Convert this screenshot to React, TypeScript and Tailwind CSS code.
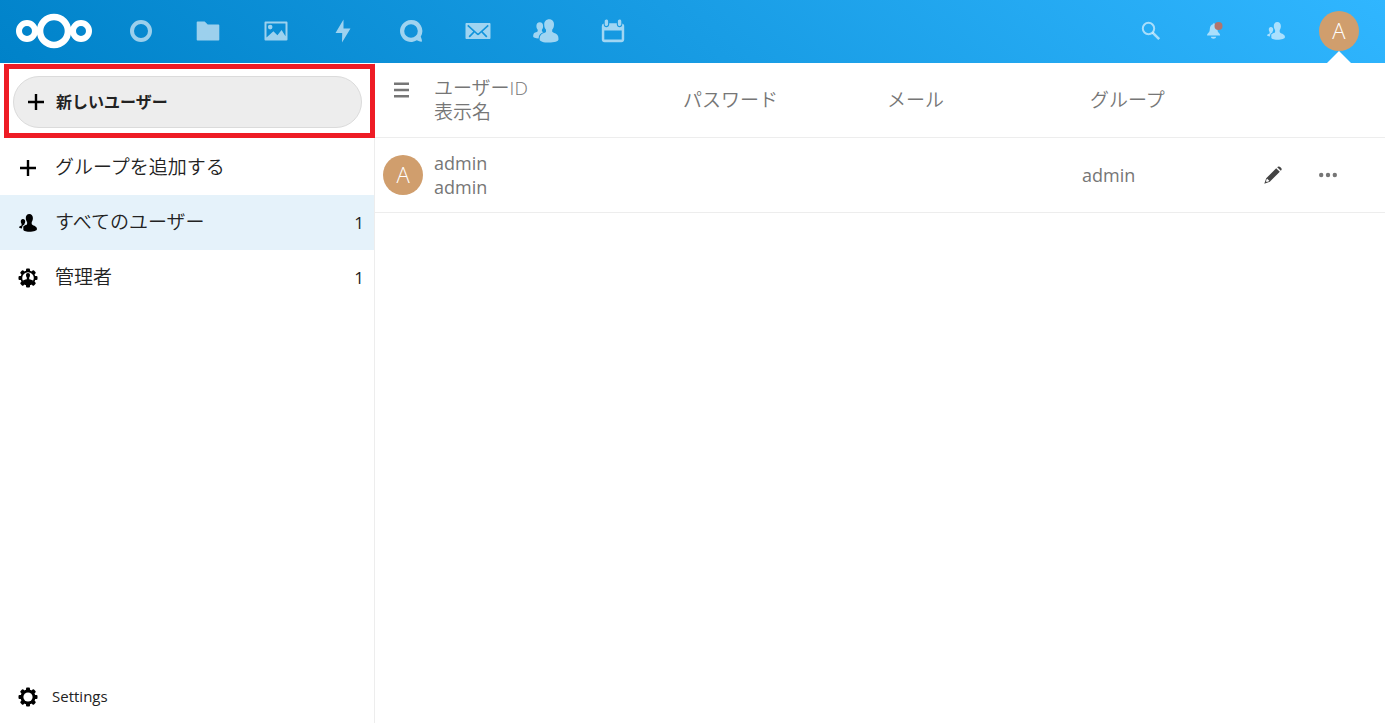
import type { ReactNode } from 'react'

type IconProps = { className?: string }

function Logo() {
  return (
    <svg width="78" height="36" viewBox="0 0 78 36" fill="none" stroke="#fff" aria-hidden="true">
      <circle cx="12" cy="18" r="8" strokeWidth="6" />
      <circle cx="39" cy="18" r="14" strokeWidth="6.6" />
      <circle cx="66" cy="18" r="8" strokeWidth="6" />
    </svg>
  )
}

function PeopleIcon({ className }: IconProps) {
  return (
    <svg className={className} viewBox="0 0 26 26" fill="currentColor" aria-hidden="true">
      <path d="M16.2 1.2c-3 0-5 2.200-5 5.200 0 2.600.8 4.100 1.800 5.400v2c-.3 1-3.300 1.400-4.800 2.700-1.100 1-1.600 2.800-1.600 5.200 0 1.500 3.800 2.900 9.300 2.900s9.600-1.300 9.600-3c0-2.400-.3-4.200-1.500-5.200-1.600-1.300-4.400-1.700-4.800-2.600v-2c1-1.300 1.800-2.800 1.800-5.400 0-3-1.800-5.200-4.800-5.200z" />
      <path d="M6.800 4.200c-2.200 0-3.400 1.700-3.400 3.800 0 1.800.6 2.900 1.300 3.800v1.400c-.3.800-2.600 1-3.500 1.900C.3 16 .2 17.300.2 18.800c0 .9 2.200 1.500 5.400 1.600.3-2.500 1.100-4.300 3.200-5.300l1.900-1c-.8-.3-1.600-.5-1.800-.9v-1.400c.7-.9 1.200-2 1.200-3.800 0-2.100-1.100-3.800-3.300-3.800z" />
    </svg>
  )
}

function UserIcon({ className }: IconProps) {
  return (
    <svg className={className} viewBox="0 0 18 18" fill="currentColor" aria-hidden="true">
      <path d="M10.300 0C8 0 6.800 1.700 6.800 4c0 1.800.6 3 1.300 4v1.900c0 1-2.900 1.200-3.600 2.400-.5.800 0 1.700-.2 2.600-.3 1.700 2.100 2.800 6 2.800 4.600 0 7.700-1 7.700-2.700 0-3.300-5-3.400-5.300-5V8c.7-1 1.200-2.200 1.200-4 0-2.300-1.300-4-3.600-4z" />
      <path d="M3.900 5C2.500 5 1.800 6.100 1.800 7.400c0 1.100.4 1.800.8 2.300v1.600C2.500 12 .1 12.100.1 13.300c0 .7 1 1.100 2.900 1.200.1-1.600.5-2.700 1.700-3.400l.7-.5v-.9c.4-.5.8-1.200.8-2.300C6.200 6.100 5.400 5 3.900 5z" />
    </svg>
  )
}

function PlusIcon() {
  return (
    <svg width="16" height="16" viewBox="0 0 16 16" fill="currentColor" aria-hidden="true">
      <path d="M6.800 0h2.400v6.800H16v2.400H9.200V16H6.800V9.200H0V6.800h6.800z" />
    </svg>
  )
}

function GearIcon({ person = false }: { person?: boolean }) {
  return (
    <svg width="20" height="20" viewBox="0 0 20 20" aria-hidden="true">
      <g fill="currentColor">
        <rect x="8" y="0.500" width="4" height="19" rx="1" />
        <rect x="0.500" y="8" width="19" height="4" rx="1" />
        <rect x="8" y="0.500" width="4" height="19" rx="1" transform="rotate(45 10 10)" />
        <rect x="8" y="0.500" width="4" height="19" rx="1" transform="rotate(-45 10 10)" />
        <circle cx="10" cy="10" r="7.500" />
      </g>
      <circle cx="10" cy="10" r={person ? 5.8 : 4.6} fill="#fff" />
      {person && (
        <path
          fill="currentColor"
          d="M10 5c-1.300 0-2 .9-2 2.200 0 1 .3 1.600.8 2.200v1.500c-.3.800-3.300.6-4.100 2.100L7 16h6l2.300-3c-.8-1.500-3.800-1.300-4.100-2.100V9.400c.5-.6.8-1.200.8-2.200C12 5.900 11.300 5 10 5z"
        />
      )}
    </svg>
  )
}

function Avatar() {
  return (
    <span className="flex size-10 items-center justify-center rounded-full bg-[#d09e6d] pb-[2px] text-[22px] leading-none font-light text-white">
      A
    </span>
  )
}

const apps: { name: string; icon: ReactNode }[] = [
  {
    name: 'ダッシュボード',
    icon: <circle cx="13" cy="13" r="9" fill="none" stroke="currentColor" strokeWidth="4" />,
  },
  {
    name: 'ファイル',
    icon: <path d="M2.500 3.500a.8.800 0 0 0-.8.800v17.400c0 .5.3.8.8.8h21c.5 0 .8-.3.800-.8V7.300c0-.5-.3-.8-.8-.8H12.700l-3-3z" />,
  },
  {
    name: '写真',
    icon: (
      <path
        fillRule="evenodd"
        d="M2.400 3.500c-.5 0-.9.400-.9.900v17.200c0 .5.4.9.900.9h21.200c.5 0 .9-.4.900-.9V4.400c0-.5-.4-.9-.9-.9zM3.500 5.500h19v12.800L18.600 12l-4.200 5.200-4-3.900-6.900 6.200zM7.200 6.800a2.300 2.300 0 1 0 0 4.600 2.300 2.300 0 0 0 0-4.600z"
      />
    ),
  },
  {
    name: 'アクティビティ',
    icon: <path d="M13.500 1.500 5.500 15h6.700l-.2 9.500 8.500-14h-7z" />,
  },
  {
    name: 'Talk',
    icon: (
      <path
        fillRule="evenodd"
        d="M13 2a11 11 0 1 0 5.900 20.300c1.700.8 3.700 1.700 4.600 1.400.9-.4.300-2.900-.8-5A11 11 0 0 0 13 2zm0 4.200a6.800 6.800 0 1 1 0 13.600 6.800 6.800 0 0 1 0-13.600z"
      />
    ),
  },
  {
    name: 'メール',
    icon: (
      <path
        fillRule="evenodd"
        d="M1.500 5h23c.5 0 1 .4 1 1v14c0 .6-.5 1-1 1h-23c-.5 0-1-.4-1-1V6c0-.6.500-1 1-1zm1.800 1.800L2.200 8l6.100 5.500-4.700 4.700 1.200 1.200 4.800-4.800 2.100 2c.8.700 1.800.7 2.600 0l2.100-2 4.800 4.800 1.200-1.200-4.700-4.700L23.800 8l-1.100-1.200-9 8.300c-.4.300-1 .3-1.400 0z"
      />
    ),
  },
  { name: '連絡先', icon: <PeopleIcon /> },
  {
    name: 'カレンダー',
    icon: (
      <path
        fillRule="evenodd"
        d="M6.400 1.500c-1 0-1.700.8-1.700 1.700v3c0 1 .8 1.800 1.700 1.800s1.700-.8 1.700-1.700V3.200c0-1-.7-1.700-1.700-1.700zm13.200 0c-1 0-1.700.8-1.700 1.700v3c0 1 .8 1.800 1.700 1.800s1.700-.8 1.700-1.700V3.200c0-1-.7-1.700-1.700-1.700zM9.200 5.300v1.200c0 1.500-1.300 2.700-2.800 2.700S3.700 8 3.700 6.500v-.9A2.700 2.700 0 0 0 1.800 8v13.500c0 1.600 1.100 2.700 2.700 2.700h17c1.600 0 2.700-1.100 2.700-2.700V8c0-1.100-.7-2-1.900-2.400v.9c0 1.500-1.200 2.700-2.700 2.700s-2.800-1.200-2.800-2.700V5.300zM4.300 12.400h17.400v9H4.300z"
      />
    ),
  },
]

function TopBar() {
  return (
    <header className="flex h-[63px] shrink-0 items-center bg-[linear-gradient(40deg,#0082c9_0%,#30b6ff_100%)] pb-px">
      <a href="#" aria-label="Nextcloud" className="flex w-[107px] shrink-0 pl-[15px]">
        <Logo />
      </a>
      <nav className="grid w-[540px] grid-cols-8">
        {apps.map((app) => (
          <a key={app.name} href="#" aria-label={app.name} className="flex justify-center text-white/60">
            <svg width="26" height="26" viewBox="0 0 26 26" fill="currentColor" aria-hidden="true">
              {app.icon}
            </svg>
          </a>
        ))}
      </nav>
      <div className="ml-auto mr-[15px] grid h-full w-[250px] grid-cols-4">
        <button aria-label="検索" className="flex items-center justify-center text-white/60">
          <svg width="20" height="20" viewBox="0 0 20 20" fill="none" stroke="currentColor" aria-hidden="true">
            <circle cx="7.500" cy="7.500" r="5.700" strokeWidth="2" />
            <path d="m11.600 11.600 6.600 6.600" strokeWidth="2.600" />
          </svg>
        </button>
        <button aria-label="通知" className="flex items-center justify-center text-white/60">
          <svg width="20" height="20" viewBox="0 0 20 20" fill="currentColor" aria-hidden="true">
            <path d="M10 1.700c-.7.200-.6 1-.6 1.300C7 3.500 5.900 5.500 5.800 8c-.1 2.500-.6 3.300-2 4.400-.6.500-.7 1.300-.7 2.100h13c0-.8-.1-1.600-.7-2.100-1.400-1.100-1.900-1.900-2-4.400C13.300 5.500 12 3.500 10.800 3z" />
            <path d="M6.800 15.800h5.400c-.2 1.200-1.300 2-2.700 2s-2.500-.8-2.700-2z" />
            <circle cx="14.500" cy="5" r="4" fill="#b2746c" />
          </svg>
        </button>
        <button aria-label="連絡先を検索" className="flex items-center justify-center text-white/60">
          <UserIcon className="size-[18px]" />
        </button>
        <button aria-label="設定" className="relative flex items-center justify-center">
          <Avatar />
          <svg className="absolute -bottom-px" width="24" height="12" viewBox="0 0 24 12" fill="#fff" aria-hidden="true">
            <path d="M12 0 24 12H0z" />
          </svg>
        </button>
      </div>
    </header>
  )
}

function Sidebar() {
  return (
    <aside className="flex w-[375px] shrink-0 flex-col border-r border-[#ededed] text-[#222]">
      <div className="-mr-px ml-1 mt-px border-5 border-[#ee1c25] pb-[5px] pl-1 pr-2 pt-[7px]">
        <button className="flex h-[52px] w-full items-center gap-3 rounded-full border border-[#dbdbdb] bg-[#ededed] pl-[14px] text-[16px] font-bold">
          <span className="text-black">
            <PlusIcon />
          </span>
          新しいユーザー
        </button>
      </div>
      <ul className="mt-[2px] text-[19px] font-[350]">
        <li>
          <button className="flex h-[55px] w-full items-center">
            <span className="flex w-[55px] justify-center text-black">
              <PlusIcon />
            </span>
            グループを追加する
          </button>
        </li>
        <li>
          <a href="#" className="flex h-[55px] items-center bg-[#e5f2fa] pr-[10px]">
            <span className="flex w-[55px] justify-center text-black">
              <UserIcon className="size-[18px]" />
            </span>
            すべてのユーザー
            <span className="ml-auto text-[17px] font-normal">1</span>
          </a>
        </li>
        <li>
          <a href="#" className="flex h-[55px] items-center pr-[10px]">
            <span className="flex w-[55px] justify-center text-black">
              <GearIcon person />
            </span>
            管理者
            <span className="ml-auto text-[17px] font-normal">1</span>
          </a>
        </li>
      </ul>
      <button className="mt-auto flex h-[53px] items-center gap-[14px] pl-[18px] text-[15px]">
        <span className="text-black">
          <GearIcon />
        </span>
        Settings
      </button>
    </aside>
  )
}

function UserTable() {
  return (
    <main className="min-w-0 flex-1">
      <table className="w-full table-fixed text-left text-[19px] leading-6 text-[#767676]">
        <colgroup>
          <col className="w-[59px]" />
          <col className="w-[249px]" />
          <col className="w-[204px]" />
          <col className="w-[203px]" />
          <col />
          <col className="w-[55px]" />
          <col className="w-[85px]" />
        </colgroup>
        <thead>
          <tr className="h-[74px] border-b border-[#ededed]">
            <th className="pb-5 pl-[19px]">
              <button aria-label="メニュー" className="block">
                <svg width="15" height="16" viewBox="0 0 15 16" fill="currentColor" aria-hidden="true">
                  <path d="M0 .5h15v2.400H0zM0 6.800h15v2.400H0zM0 13h15v2.400H0z" />
                </svg>
              </button>
            </th>
            <th className="font-[350]">
              ユーザーID
              <br />
              表示名
            </th>
            <th className="font-[350]">パスワード</th>
            <th className="font-[350]">メール</th>
            <th className="font-[350]">グループ</th>
            <td />
            <td />
          </tr>
        </thead>
        <tbody>
          <tr className="h-[75px] border-b border-[#ededed]">
            <td className="pl-2">
              <Avatar />
            </td>
            <td className="text-[18px]">
              admin
              <br />
              admin
            </td>
            <td />
            <td />
            <td className="text-[18px]">
              <span className="-ml-2">admin</span>
            </td>
            <td>
              <button aria-label="ユーザーを編集" className="mx-auto block text-[#444]">
                <svg width="18" height="18" viewBox="0 0 18 18" fill="currentColor" aria-hidden="true">
                  <path d="M14.700.4c-.6 0-1 .3-1.500.8l3.600 3.600c.6-.5.900-1 .9-1.600 0-1.300-1.600-2.800-3-2.800z" />
                  <path
                    fillRule="evenodd"
                    d="M12.200 2.200 2.200 12.200.3 17.700l5.500-1.900L15.800 5.800zM3.200 12.700l2.100 2.100-.4.500-2.200.7-.7-.7.700-2.200z"
                  />
                </svg>
              </button>
            </td>
            <td className="pr-[30px]">
              <button aria-label="その他の操作" className="mx-auto block">
                <svg width="18" height="6" viewBox="0 0 18 6" fill="currentColor" aria-hidden="true">
                  <circle cx="2.200" cy="3" r="2.200" />
                  <circle cx="9" cy="3" r="2.200" />
                  <circle cx="15.800" cy="3" r="2.200" />
                </svg>
              </button>
            </td>
          </tr>
        </tbody>
      </table>
    </main>
  )
}

export default function App() {
  return (
    <div className="flex min-h-screen flex-col bg-white font-['Open_Sans','Noto_Sans_CJK_JP',sans-serif]">
      <TopBar />
      <div className="flex flex-1">
        <Sidebar />
        <UserTable />
      </div>
    </div>
  )
}
